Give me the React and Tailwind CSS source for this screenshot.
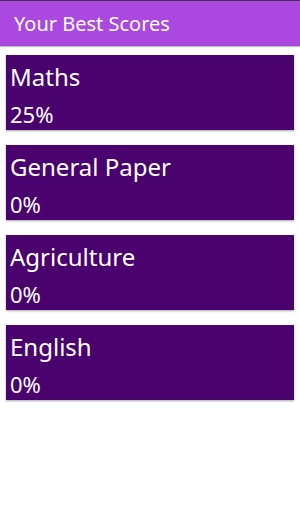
const scores = [
  { subject: "Maths", score: "25%" },
  { subject: "General Paper", score: "0%" },
  { subject: "Agriculture", score: "0%" },
  { subject: "English", score: "0%" },
];

export default function App() {
  return (
    <div className="w-[300px] h-[514px] bg-white overflow-hidden" style={{ fontFamily: '"Noto Sans", "Open Sans", sans-serif' }}>
      <div className="h-px bg-[#4b2a5e]" />
      <div className="h-[45px] bg-[#ab48e0] flex items-center px-[14px] shadow-[0_1px_1px_rgba(0,0,0,0.25)]">
        <span className="text-white text-[20px] leading-none">Your Best Scores</span>
      </div>

      <div className="flex flex-col gap-[15px] px-[6px] pt-[9px]">
        {scores.map((s) => (
          <div key={s.subject} className="h-[75px] bg-[#4a036e] shadow-[0_1px_2px_rgba(0,0,0,0.35)] px-[4px] pt-[5px] text-white">
            <div className="text-[24px] leading-[34px]">{s.subject}</div>
            <div className="text-[22px] leading-[30px] mt-[5px]">{s.score}</div>
          </div>
        ))}
      </div>
    </div>
  );
}
